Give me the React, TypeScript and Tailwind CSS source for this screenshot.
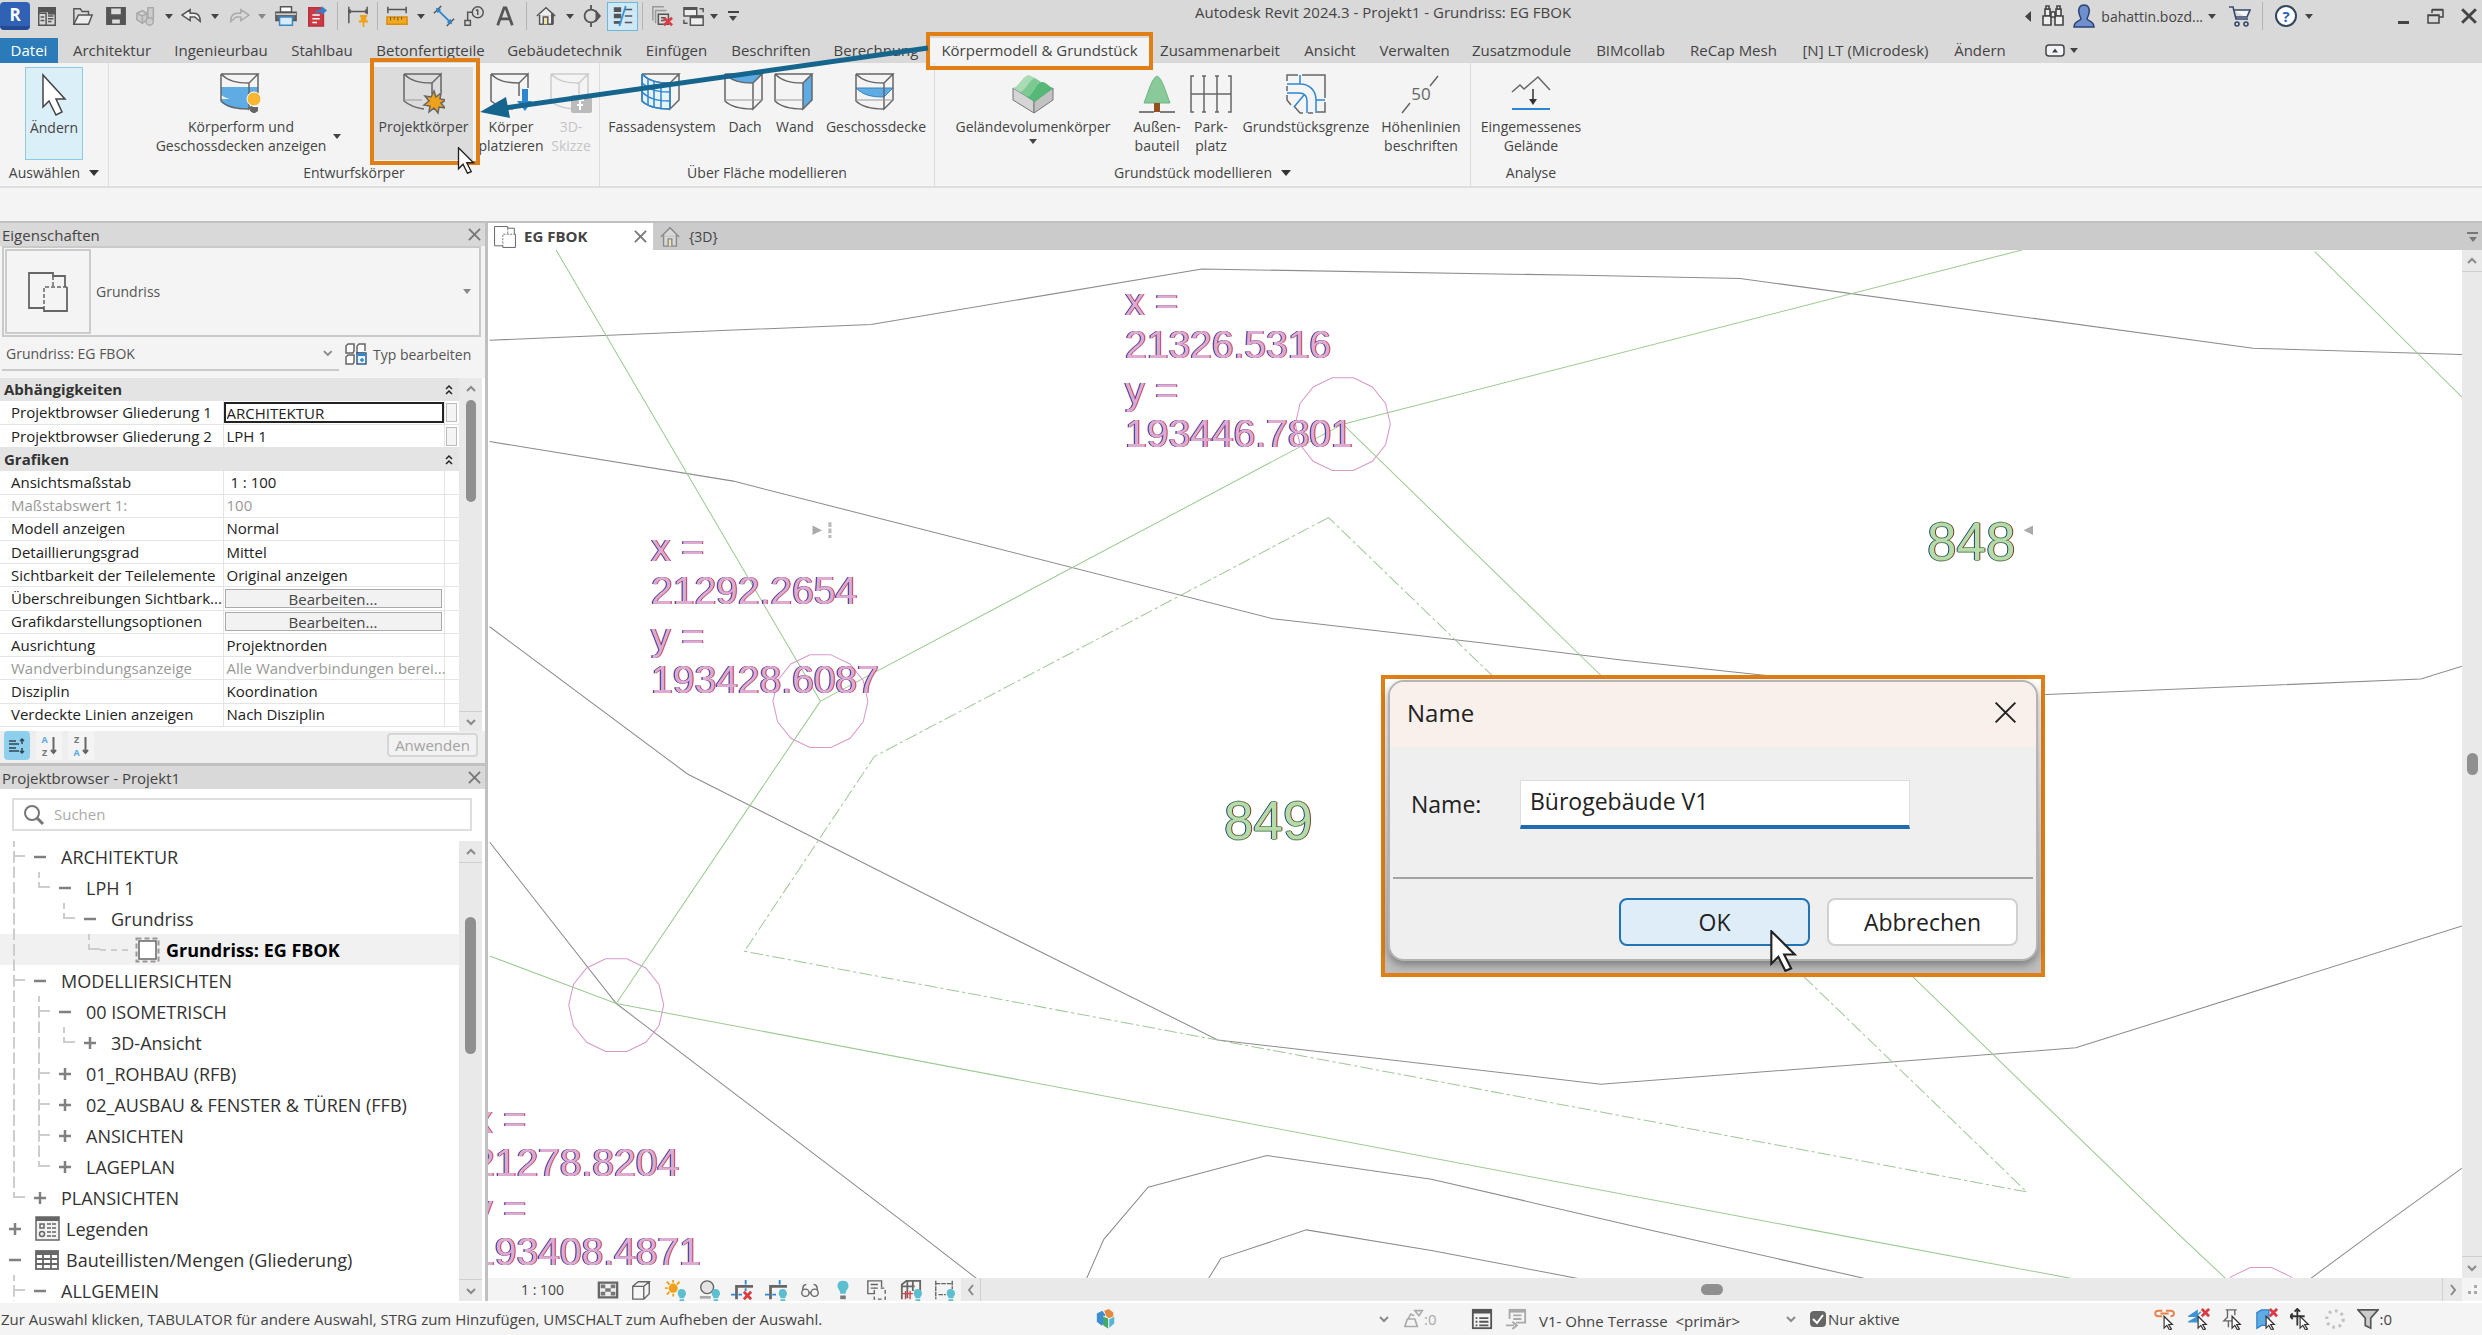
import React from 'react';

type IconProps = { className?: string };

const Caret: React.FC<IconProps> = ({ className = 'text-[#444]' }) => (
  <svg width="8" height="5" viewBox="0 0 8 5" className={`shrink-0 ${className}`}>
    <path d="M0 0h8L4 5z" fill="currentColor" />
  </svg>
);

const Chevron: React.FC<{ dir: 'up' | 'down' | 'left' | 'right' }> = ({ dir }) => {
  const d = {
    up: 'M2 8l4-4 4 4',
    down: 'M2 4l4 4 4-4',
    left: 'M8 1L4 6l4 5',
    right: 'M4 1l4 5-4 5',
  }[dir];
  return (
    <svg width="12" height="12" viewBox="0 0 12 12" fill="none" stroke="#8a8a8a" strokeWidth="2">
      <path d={d} />
    </svg>
  );
};

const Cross: React.FC<{ size: number; color?: string; weight?: number }> = ({ size, color = '#777', weight = 2 }) => (
  <svg width={size} height={size} viewBox="0 0 14 14" fill="none" stroke={color} strokeWidth={weight}>
    <path d="M1 1l12 12M13 1L1 13" />
  </svg>
);

const Pointer: React.FC<IconProps> = ({ className }) => (
  <svg viewBox="0 0 24 36" className={className}>
    <path d="M2 1v28l6-6 6 12 5-2-6-12h9z" fill="#fff" stroke="#222" strokeWidth="1.8" />
  </svg>
);

/* ---------- Quick access icons ---------- */

const Qa: React.FC<{ children: React.ReactNode; size?: number }> = ({ children, size = 22 }) => (
  <svg width={size} height={size} viewBox="0 0 24 24" fill="none" stroke="#555" strokeWidth="1.6">
    {children}
  </svg>
);

const quickItems: { id: string; w: string; label: string; icon: React.ReactNode }[] = [
  {
    id: 'panel', w: 'w-[34px]', label: 'Startseite',
    icon: <Qa><path d="M3 3h18v19H3z" /><path d="M3 3h18v4H3z" fill="#555" /><path d="M3 9h8v13M13 12h6M13 15h6M13 18h4M5 13h4M5 17h4" /><path d="M13 9h8" strokeWidth="3" /></Qa>,
  },
  {
    id: 'open', w: 'w-[38px]', label: 'Öffnen',
    icon: <Qa><path d="M2 21V4h7l2 3h7v4" /><path d="M2 21l5-10h15l-4 10z" fill="#eee" /></Qa>,
  },
  {
    id: 'save', w: 'w-[28px]', label: 'Speichern',
    icon: <Qa><path d="M2 3h20v18H2z" fill="#555" /><path d="M6 3h12v8H6z" fill="#ddd" /><path d="M7 15h10v6H7z" fill="#ddd" /></Qa>,
  },
  {
    id: 'sync', w: 'w-[32px]', label: 'Synchronisieren',
    icon: <Qa><g stroke="#a9a9a9" fill="#ccc"><path d="M2 9l6-3 5 3v7l-5 4-6-4zM2 9l6 3 5-3M8 12v8" /><path d="M14 3h6v12h-6z" /><circle cx="16" cy="18" r="4" /></g></Qa>,
  },
  { id: 'c1', w: 'w-[14px]', label: 'Synchronisieren Optionen', icon: <Caret /> },
  {
    id: 'undo', w: 'w-[32px]', label: 'Rückgängig',
    icon: <Qa><path d="M10 5l-9 6 9 6v-4h5l6 5c0-6-3-9-7-9h-4z" fill="#eee" /></Qa>,
  },
  { id: 'c2', w: 'w-[14px]', label: 'Rückgängig Optionen', icon: <Caret /> },
  {
    id: 'redo', w: 'w-[34px]', label: 'Wiederherstellen',
    icon: <Qa><path d="M14 5l9 6-9 6v-4H9l-6 5c0-6 3-9 7-9h4z" stroke="#aaa" /></Qa>,
  },
  { id: 'c3', w: 'w-[12px]', label: 'Wiederherstellen Optionen', icon: <Caret className="text-[#888]" /> },
  {
    id: 'print', w: 'w-[36px]', label: 'Drucken',
    icon: <Qa><path d="M6 2h12v6H6z" fill="#fff" /><path d="M1 8h22v9H1z" fill="#666" /><path d="M5 13h14v9H5z" fill="#d7ecfa" stroke="#3b87c4" /><path d="M1 10h22" stroke="#ddd" /></Qa>,
  },
  {
    id: 'pdf', w: 'w-[26px]', label: 'Als PDF exportieren',
    icon: <Qa><path d="M3 3h13l3 4v16H3z" fill="#cc3b45" stroke="#b92f3a" /><path d="M7 11h8M7 15h8M7 19h5" stroke="#fff" /><path d="M10 10c0-4 3-5 7-5V1l6 5-6 5V8c-3 0-5 0-7 2z" fill="#2f83cc" stroke="none" /></Qa>,
  },
];

const quickItemsTwo: typeof quickItems = [
  {
    id: 'ruler', w: 'w-[38px]', label: 'Messen',
    icon: <Qa><path d="M2 5h20M2 2v7M22 2v7" /><path d="M1 13h22v8H1z" fill="#f5a81c" stroke="#d98d0a" /><path d="M5 13v4M9 13v3M13 13v4M17 13v3" strokeWidth="1" /></Qa>,
  },
  { id: 'c4', w: 'w-[10px]', label: 'Messen Optionen', icon: <Caret /> },
  {
    id: 'align', w: 'w-[36px]', label: 'Ausgerichtete Bemaßung',
    icon: <Qa><path d="M5 5l14 14" stroke="#2d86d0" strokeWidth="2" /><path d="M1 9l8-8M15 23l8-8" /><path d="M3 3l6 2-4 4zM21 21l-6-2 4-4z" fill="#2d86d0" stroke="none" /></Qa>,
  },
  {
    id: 'tag', w: 'w-[26px]', label: 'Beschriftung nach Kategorie',
    icon: <Qa><circle cx="15" cy="8" r="6" /><path d="M15 5v6M13 6l2-1M9 8H4v9M1 17h6v5H1z" /></Qa>,
  },
  {
    id: 'text', w: 'w-[34px]', label: 'Text',
    icon: <Qa><path d="M4 22L11 3h2l7 19M7 15h10" strokeWidth="3" /></Qa>,
  },
];

const quickItemsThree: typeof quickItems = [
  {
    id: 'home', w: 'w-[38px]', label: '3D-Ansicht',
    icon: <Qa><path d="M2 12L12 3l10 9M5 11v10h14V11" fill="#eee" /><path d="M9 21v-8h5v8" fill="#f1e2a5" /><path d="M19 9v12" strokeWidth="3" /></Qa>,
  },
  { id: 'c5', w: 'w-[10px]', label: '3D-Ansicht Optionen', icon: <Caret /> },
  {
    id: 'section', w: 'w-[32px]', label: 'Schnitt',
    icon: <Qa><circle cx="12" cy="12" r="7" strokeWidth="2" /><path d="M12 0v5M12 19v5" strokeWidth="2" /><path d="M17 5l6 7-6 7z" fill="#555" stroke="none" /></Qa>,
  },
];

const QuickGroup: React.FC<{ items: typeof quickItems }> = ({ items }) => (
  <>
    {items.map((item) => (
      <button key={item.id} aria-label={item.label} className={`${item.w} h-8 shrink-0 flex items-center justify-center`}>
        {item.icon}
      </button>
    ))}
  </>
);

const Separator = () => <div className="w-px h-7 shrink-0 bg-[#b4b4b4]" />;

const TitleBar = () => (
  <div className="h-[38px] flex items-start bg-[#d9d9d9]">
    <div className="flex items-center h-8">
      <button aria-label="Revit" className="w-[30px] h-[28px] rounded-sm bg-[#2f62b4] border-b-4 border-[#234a92] text-white font-bold text-[17px] leading-none">R</button>
      <QuickGroup items={quickItems} />
      <div className="w-[7px] shrink-0" />
      <Separator />
      <button aria-label="Bemaßung fixieren" className="w-[39px] h-8 flex items-center justify-center">
        <Qa><path d="M2 2v18M22 2v8M2 7h20" /><path d="M4 5l-2 2 2 2M20 5l2 2-2 2" /><path d="M14 11h8v2h-1v4h2v2h-4v5h-2v-5h-4v-2h2v-4h-1z" fill="#f0a11a" stroke="none" /></Qa>
      </button>
      <Separator />
      <QuickGroup items={quickItemsTwo} />
      <div className="w-1 shrink-0" />
      <Separator />
      <QuickGroup items={quickItemsThree} />
      <button aria-label="Dünne Linien" className="w-[31px] h-[29px] bg-[#cfe8f5] border border-[#6cb9de] flex items-center justify-center">
        <Qa><path d="M2 5h8M2 12h8" strokeWidth="5" /><path d="M2 19h8" strokeWidth="3" /><path d="M14 5h8M14 12h8M14 19h8" /><path d="M15 1L8 23" stroke="#3493d6" strokeWidth="2" /></Qa>
      </button>
      <div className="w-1" />
      <Separator />
      <button aria-label="Inaktive Ansichten schließen" className="w-[38px] h-8 flex items-center justify-center">
        <Qa><path d="M2 17V2h12M5 20V6h12" stroke="#999" /><path d="M8 10h11v11H8zM11 14h5M11 17h4" /><path d="M14 14l9 8M23 14l-9 8" stroke="#dc3b45" strokeWidth="3" /></Qa>
      </button>
      <button aria-label="Fenster wechseln" className="w-[26px] h-8 flex items-center justify-center">
        <Qa><path d="M1 3h14v9H1zM8 12h14v10H8z" fill="#eee" /><path d="M8 13h14M1 4h14" strokeWidth="3" /><path d="M18 4h4v4M5 20H1v-4" /></Qa>
      </button>
      <button aria-label="Fenster Optionen" className="w-[14px] h-8 flex items-center justify-center"><Caret /></button>
      <button aria-label="Schnellzugriff anpassen" className="w-[24px] h-8 flex flex-col items-center justify-center gap-[3px]">
        <span className="w-[11px] h-[2px] bg-[#444]" />
        <Caret />
      </button>
    </div>
    <div className="ml-[450px] leading-6 text-[15px] text-[#444] whitespace-nowrap">Autodesk Revit 2024.3 - Projekt1 - Grundriss: EG FBOK</div>
    <div className="ml-auto flex items-center h-8 text-[#444]">
      <button aria-label="Infocenter ausblenden" className="w-[8px]">
        <svg width="6" height="11" viewBox="0 0 6 11"><path d="M6 0v11L0 5.5z" fill="#444" /></svg>
      </button>
      <button aria-label="Suchen" className="ml-2">
        <Qa size={24}><g stroke="#444" fill="#eee"><path d="M4 5h5v7H4zM15 5h5v7h-5z" /><path d="M2 12h8v9H2zM14 12h8v9h-8z" /><path d="M5 2h3v3H5zM16 2h3v3h-3zM10 8h4v5h-4z" /></g></Qa>
      </button>
      <button className="flex items-center ml-[7px] text-[14px] whitespace-nowrap">
        <svg width="24" height="26" viewBox="0 0 24 26" className="mr-[5px]">
          <path d="M12 2c4 0 6 3 5 8-.5 3-2 5-2 6 1 2 7 2 7 8H2c0-6 6-6 7-8 0-1-1.5-3-2-6C6 5 8 2 12 2z" fill="#6f8fcf" stroke="#2b4372" strokeWidth="1.5" />
        </svg>
        bahattin.bozd...
        <Caret className="ml-[5px] text-[#444]" />
      </button>
      <button aria-label="App Store" className="ml-3">
        <Qa size={24}><path d="M1 3h4l3 12h12M5 6h17l-3 7H8" stroke="#37466b" fill="#f4f6fb" /><circle cx="9" cy="20" r="2" stroke="#37466b" /><circle cx="18" cy="20" r="2" stroke="#37466b" /></Qa>
      </button>
      <div className="w-[10px]" />
      <Separator />
      <button aria-label="Hilfe" className="ml-3 w-[22px] h-[22px] rounded-full border-2 border-[#34465f] bg-white text-[#2d63b8] text-[15px] font-bold leading-none">?</button>
      <button aria-label="Hilfe Optionen" className="w-[24px] flex justify-center"><Caret /></button>
      <button aria-label="Minimieren" className="ml-[77px] w-[11px] h-[3px] bg-[#444] mt-3" />
      <button aria-label="Wiederherstellen" className="ml-[18px]">
        <svg width="17" height="16" viewBox="0 0 17 16" fill="none" stroke="#444" strokeWidth="1.5"><path d="M5 5V2h11v7h-4M5 1.500h11" /><path d="M1 7h11v8H1zM1 7.500h11" /></svg>
      </button>
      <button aria-label="Schließen" className="ml-[17px] mr-[5px]"><Cross size={16} color="#444" weight={2.5} /></button>
    </div>
  </div>
);

/* ---------- Ribbon ---------- */

const tabs = [
  { name: 'Architektur', w: 'w-[102px]' },
  { name: 'Ingenieurbau', w: 'w-[116px]' },
  { name: 'Stahlbau', w: 'w-[86px]' },
  { name: 'Betonfertigteile', w: 'w-[131px]' },
  { name: 'Gebäudetechnik', w: 'w-[137px]' },
  { name: 'Einfügen', w: 'w-[87px]' },
  { name: 'Beschriften', w: 'w-[102px]' },
  { name: 'Berechnung', w: 'w-[108px]' },
  { name: 'Körpermodell & Grundstück', w: 'w-[219px]' },
  { name: 'Zusammenarbeit', w: 'w-[142px]' },
  { name: 'Ansicht', w: 'w-[78px]' },
  { name: 'Verwalten', w: 'w-[91px]' },
  { name: 'Zusatzmodule', w: 'w-[123px]' },
  { name: 'BIMcollab', w: 'w-[95px]' },
  { name: 'ReCap Mesh', w: 'w-[111px]' },
  { name: '[N] LT (Microdesk)', w: 'w-[153px]' },
  { name: 'Ändern', w: 'w-[76px]' },
];

const RibbonTabs = () => (
  <div className="h-[25px] flex items-stretch bg-[#d9d9d9] text-[15px] leading-5 text-[#444] whitespace-nowrap">
    <button className="w-[58px] mr-[3px] pb-[2px] bg-[#2b7bb9] text-white">Datei</button>
    {tabs.map((tab) => (
      <button key={tab.name} className={`${tab.w} shrink-0 pb-[2px] ${tab.name.startsWith('Körper') ? 'bg-[#f4f4f4]' : ''}`}>
        {tab.name}
      </button>
    ))}
    <button aria-label="Multifunktionsleiste minimieren" className="ml-[27px] flex items-center gap-[5px]">
      <svg width="20" height="13" viewBox="0 0 20 13"><rect x="1" y="1" width="18" height="11" rx="3" fill="#f2f4f8" stroke="#444" strokeWidth="1.5" /><path d="M7 8.500h6L10 4.500z" fill="#444" /></svg>
      <Caret />
    </button>
  </div>
);

// Base volume shared by all mass tools; extras are layered on top
const Mass: React.FC<{ under?: React.ReactNode; children?: React.ReactNode; stroke?: string }> = ({ under, children, stroke = '#666' }) => (
  <svg width="42" height="44" viewBox="-1 -2 42 44" fill="none" stroke={stroke} strokeWidth="1.5">
    {under}
    <path d="M0 0h37l-9 9v26l9-9V0M0 0v27c6 6 14 8 28 8M0 0c7 7 15 9 28 9" />
    {children}
  </svg>
);

const massBulb = (
  <Mass under={<path d="M0 13h37v8l-9 6C14 27 6 25 0 21zM0 25h28v10C14 36 6 34 0 28z" fill="#5fabe4" stroke="none" />}>
    <circle cx="33" cy="25" r="7" fill="#f8b632" stroke="#fff" strokeWidth="1" />
    <path d="M29 33h8v4l-3 2h-2l-3-2z" fill="#666" stroke="none" />
  </Mass>
);

// The star and the down arrow sit where the lower right edges are cut away
const massStar = (
  <svg width="42" height="44" viewBox="-1 -2 42 44" fill="none" stroke="#666" strokeWidth="1.5">
    <path d="M28 20V9l9-9v18M0 0h37M0 0v27c6 5 12 7 20 8M0 0c7 7 15 9 28 9" />
    <path d="M0 26h18" stroke="#999" strokeWidth="1" />
    <path d="M30 17l2 6 5-4-1 6 6 1-5 3 4 5-6-1-1 6-4-5-5 4 1-6-6-1 5-4-4-5 6 1z" fill="#f0a11a" />
  </svg>
);

const massPlace = (
  <svg width="42" height="44" viewBox="-1 -2 42 44" fill="none" stroke="#666" strokeWidth="1.5">
    <path d="M28 22V9l9-9v14M0 0h37M0 0v27c6 5 12 7 22 8M0 0c7 7 15 9 28 9" />
    <path d="M31 15h6v12h4l-7 10-8-10h5z" fill="#2d86d0" stroke="none" />
  </svg>
);

const massFamily = (
  <Mass stroke="#ccc">
    <rect x="20" y="21" width="21" height="18" rx="2" fill="#bbb" stroke="none" />
    <path d="M33 26h-4v10M26 31h6" stroke="#fff" strokeWidth="2" />
  </Mass>
);

const massCurtain = (
  <Mass under={<path d="M0 0c7 7 15 9 28 9v26C14 35 6 33 0 27z" fill="#e6f3fc" stroke="none" />}>
    <path d="M0 9c7 7 15 9 28 9M0 18c7 7 15 9 28 9M6 5v26M12 7v27M19 9v26M28 9v26M0 0v27c6 6 14 8 28 8M0 0c7 7 15 9 28 9" stroke="#2d86d0" />
  </Mass>
);

const massRoof = (
  <Mass under={<path d="M0 0h37l-9 9C15 9 7 7 0 0z" fill="#5fabe4" stroke="none" />}>
    <path d="M0 26h37" stroke="#999" strokeWidth="1" />
  </Mass>
);

const massWall = (
  <Mass under={<path d="M37 0l-9 9v26l9-9z" fill="#5fabe4" stroke="none" />}>
    <path d="M0 26h28" stroke="#999" strokeWidth="1" />
  </Mass>
);

const massFloor = (
  <Mass under={<path d="M0 14h37l-9 9C15 23 7 21 0 14z" fill="#5fabe4" stroke="#3b83bd" strokeWidth="1" />}>
    <path d="M0 26h37" stroke="#999" strokeWidth="1" />
  </Mass>
);

const terrain = (
  <svg width="42" height="40" viewBox="0 0 42 40">
    <path d="M1 14v12l21 13V27z" fill="#d5d5d5" stroke="#777" />
    <path d="M22 27v12l19-13V14z" fill="#c2c2c2" stroke="#777" />
    <path d="M1 14c7-2 9-12 16-13l6 3c-6 3-9 12-15 14z" fill="#a9dcb5" />
    <path d="M8 18c6-2 9-12 15-14l6 4c-6 2-8 13-14 15z" fill="#7cc994" />
    <path d="M15 23c6-2 8-13 14-15 5-1 8 5 12 6L23 28z" fill="#55b877" />
  </svg>
);

const tree = (
  <svg width="38" height="40" viewBox="0 0 38 40">
    <path d="M19 2c5 2 8 14 13 27H6C11 16 14 4 19 2z" fill="#8ac99a" stroke="#6db582" />
    <path d="M16 29h6v9h-6z" fill="#96501f" />
    <path d="M1 38h15M22 38h15" stroke="#555" strokeWidth="1.5" />
  </svg>
);

const parking = (
  <svg width="42" height="40" viewBox="0 0 42 40" fill="none" stroke="#666" strokeWidth="1.5">
    <path d="M4 2H1v36h3M12 2h4M14 2v36M12 38h4M25 2h4M27 2v36M25 38h4M38 2h3v36h-3M1 20h40" />
  </svg>
);

const boundary = (
  <svg width="40" height="42" viewBox="0 0 40 42" fill="none" strokeWidth="1.5">
    <path d="M1 8V2h11M16 2h23v23M39 29v10h-8M27 40h-5M17 40h-3L8 33M1 13v5M1 22v5l4 5" stroke="#666" />
    <path d="M1 11h13c10 0 16 7 16 16v13M1 20h12c5 0 8 3 8 8v12M14 2v9M30 27h9M18 22L8 34" stroke="#2d86d0" />
  </svg>
);

const contourLabel = (
  <svg width="40" height="42" viewBox="0 0 40 42" fill="none" stroke="#666" strokeWidth="1.5">
    <path d="M29 13l8-10M1 40l8-10" />
    <text x="20" y="27" textAnchor="middle" fontSize="17" fill="#666" stroke="none">50</text>
  </svg>
);

const graded = (
  <svg width="42" height="40" viewBox="0 0 42 40" fill="none" stroke="#666" strokeWidth="1.5">
    <path d="M2 18l8-7 4 4L28 3l12 13" />
    <path d="M23 15v13" stroke="#333" />
    <path d="M19 25h8l-4 6z" fill="#333" stroke="none" />
    <path d="M2 35h38" stroke="#2d86d0" strokeWidth="2" />
  </svg>
);

const Tool: React.FC<{ w: string; icon: React.ReactNode; lines: string[]; look?: string; caret?: boolean }> = ({ w, icon, lines, look = '', caret }) => (
  <button className={`${w} ${look} h-[93px] shrink-0 flex flex-col items-center pt-1 text-[14px] leading-[19px] whitespace-nowrap`}>
    <span className="h-[46px] flex items-center">{icon}</span>
    {lines.map((line) => (
      <span key={line}>{line}</span>
    ))}
    {caret && <Caret className="mt-[3px] text-[#444]" />}
  </button>
);

const RibbonPanel: React.FC<{ w: string; title: string; caret?: boolean; last?: boolean; children: React.ReactNode }> = ({ w, title, caret, last, children }) => (
  <section className={`${w} shrink-0 flex flex-col pt-1 ${last ? '' : 'border-r border-[#dcdcdc]'}`}>
    <div className="flex flex-1 items-start">{children}</div>
    <div className="h-[26px] flex items-center justify-center gap-[9px] text-[14px] leading-none">
      {title}
      {caret && <svg width="10" height="6" viewBox="0 0 10 6"><path d="M0 0h10L5 6z" fill="#333" /></svg>}
    </div>
  </section>
);

const Ribbon = () => (
  <div className="h-[125px] flex bg-[#f4f4f4] border-b-2 border-[#dedede] text-[#444]">
    <RibbonPanel w="w-[109px]" title="Auswählen" caret>
      <Tool
        w="w-[58px]" look="ml-[25px] bg-[#dbeff8] border border-[#8ccbe6]" lines={['Ändern']}
        icon={<svg width="28" height="44" viewBox="0 0 28 44"><path d="M3 2v32l6-6 7 14 6-3-6-13h9z" fill="#fff" stroke="#444" strokeWidth="1.5" /></svg>}
      />
    </RibbonPanel>
    <RibbonPanel w="w-[491px]" title="Entwurfskörper">
      <Tool w="w-[200px]" look="ml-[32px]" lines={['Körperform und', 'Geschossdecken anzeigen']} icon={massBulb} />
      <span className="w-[33px] h-[93px] flex items-center pt-[46px]"><span className="-ml-2"><Caret className="text-[#444]" /></span></span>
      <Tool w="w-[99px]" look="bg-[#dcdcdc]" lines={['Projektkörper']} icon={massStar} />
      <Tool w="w-[76px]" lines={['Körper', 'platzieren']} icon={massPlace} />
      <Tool w="w-[44px]" look="text-[#c4c4c4]" lines={['3D-', 'Skizze']} icon={massFamily} />
    </RibbonPanel>
    <RibbonPanel w="w-[335px]" title="Über Fläche modellieren">
      <Tool w="w-[124px]" lines={['Fassadensystem']} icon={massCurtain} />
      <Tool w="w-[42px]" lines={['Dach']} icon={massRoof} />
      <Tool w="w-[58px]" lines={['Wand']} icon={massWall} />
      <Tool w="w-[104px]" lines={['Geschossdecke']} icon={massFloor} />
    </RibbonPanel>
    <RibbonPanel w="w-[536px]" title="Grundstück modellieren" caret>
      <Tool w="w-[182px]" look="ml-[7px]" lines={['Geländevolumenkörper']} icon={terrain} caret />
      <Tool w="w-[66px]" lines={['Außen-', 'bauteil']} icon={tree} />
      <Tool w="w-[42px]" lines={['Park-', 'platz']} icon={parking} />
      <Tool w="w-[148px]" lines={['Grundstücksgrenze']} icon={boundary} />
      <Tool w="w-[82px]" lines={['Höhenlinien', 'beschriften']} icon={contourLabel} />
    </RibbonPanel>
    <RibbonPanel w="w-[120px]" title="Analyse" last>
      <Tool w="w-[120px]" lines={['Eingemessenes', 'Gelände']} icon={graded} />
    </RibbonPanel>
  </div>
);

/* ---------- Properties palette ---------- */

const PaletteHeader: React.FC<{ title: string }> = ({ title }) => (
  <div className="h-[23px] shrink-0 flex items-center justify-between bg-[#d9d9d9] pl-[2px] pr-[4px] text-[15px] leading-5 text-[#444]">
    <h2>{title}</h2>
    <button aria-label={`${title} schließen`}><Cross size={13} /></button>
  </div>
);

type Row = { head?: string; name?: string; value?: string; kind?: 'input' | 'button' | 'muted'; extra?: boolean };

const rows: Row[] = [
  { head: 'Abhängigkeiten' },
  { name: 'Projektbrowser Gliederung 1', value: 'ARCHITEKTUR', kind: 'input', extra: true },
  { name: 'Projektbrowser Gliederung 2', value: 'LPH 1', extra: true },
  { head: 'Grafiken' },
  { name: 'Ansichtsmaßstab', value: ' 1 : 100' },
  { name: 'Maßstabswert 1:', value: '100', kind: 'muted' },
  { name: 'Modell anzeigen', value: 'Normal' },
  { name: 'Detaillierungsgrad', value: 'Mittel' },
  { name: 'Sichtbarkeit der Teilelemente', value: 'Original anzeigen' },
  { name: 'Überschreibungen Sichtbark...', value: 'Bearbeiten...', kind: 'button' },
  { name: 'Grafikdarstellungsoptionen', value: 'Bearbeiten...', kind: 'button' },
  { name: 'Ausrichtung', value: 'Projektnorden' },
  { name: 'Wandverbindungsanzeige', value: 'Alle Wandverbindungen berei...', kind: 'muted' },
  { name: 'Disziplin', value: 'Koordination' },
  { name: 'Verdeckte Linien anzeigen', value: 'Nach Disziplin' },
];

const PropertyRow: React.FC<{ row: Row }> = ({ row }) => {
  if (row.head) {
    return (
      <tr className="h-[23px] bg-[#e4e4e4]">
        <th colSpan={3} className="text-left font-bold text-[#333] pl-1 pr-[6px]">
          <span className="flex items-center justify-between">
            {row.head}
            <svg width="8" height="11" viewBox="0 0 8 11" fill="none" stroke="#222" strokeWidth="1.5"><path d="M1 5l3-3 3 3M1 10l3-3 3 3" /></svg>
          </span>
        </th>
      </tr>
    );
  }
  const id = row.name?.replace(/\W/g, '');
  return (
    <tr className={`h-[23px] border-b border-[#e4e4e4] ${row.kind === 'muted' ? 'text-[#999]' : 'text-[#222]'}`}>
      <td className="pl-[11px] border-r border-[#e4e4e4] whitespace-nowrap"><label htmlFor={id}>{row.name}</label></td>
      <td className={`border-r border-[#e4e4e4] whitespace-pre ${row.kind === 'button' || row.kind === 'input' ? '' : 'pl-[3px]'}`}>
        {row.kind === 'input' && (
          <input id={id} defaultValue={row.value} className="block w-full h-[21px] bg-white border-2 border-[#222] pl-px" />
        )}
        {row.kind === 'button' && (
          <button id={id} className="block w-[217px] h-[19px] leading-[16px] ml-px bg-[#f2f2f2] border border-[#aaa] text-[#444]">{row.value}</button>
        )}
        {row.kind !== 'input' && row.kind !== 'button' && row.value}
      </td>
      <td>{row.extra && <button aria-label={`${row.name} Optionen`} className="block ml-px w-[11px] h-[19px] bg-[#f4f4f4] border border-[#bbb]" />}</td>
    </tr>
  );
};

const PlanIcon: React.FC<IconProps> = ({ className }) => (
  <svg viewBox="0 0 40 40" className={className} fill="none" stroke="#666" strokeWidth="1.8">
    <path d="M16 36H1V1h24v3h12v11" />
    <path d="M16 36v3h23V15" />
    <path d="M39 15H16v21M25 4v11" strokeDasharray="4 2" strokeWidth="1.5" />
  </svg>
);

const Properties = () => (
  <section className="shrink-0 bg-[#f4f4f4] border-b-[3px] border-[#c0c0c0]">
    <PaletteHeader title="Eigenschaften" />
    <button className="ml-[2px] w-[479px] h-[91px] border-2 border-[#cacaca] flex items-center text-[14px] text-[#555]">
      <span className="w-[86px] h-[85px] ml-px border-2 border-[#ccc] flex items-center justify-center">
        <PlanIcon className="w-10 h-10" />
      </span>
      <span className="ml-[5px] mr-auto">Grundriss</span>
      <Caret className="mr-[8px] text-[#888]" />
    </button>
    <div className="h-[41px] flex items-start text-[14px] text-[#555]">
      <div className="ml-[2px] w-[337px] h-[34px] border-b-2 border-[#cacaca] flex items-center pr-[5px]">
        <select aria-label="Ansicht" className="appearance-none w-full pl-1 outline-none">
          <option>Grundriss: EG FBOK</option>
        </select>
        <Chevron dir="down" />
      </div>
      <button className="ml-[6px] h-[34px] flex items-center gap-[6px] whitespace-nowrap">
        <svg width="22" height="22" viewBox="0 0 22 22" fill="#fff" stroke="#666" strokeWidth="1.5">
          <path d="M1 3l2-2h6v7l-1 2H1zM12 3l2-2h6v7M1 14l2-2h6v7l-1 2H1zM12 3v7h7" />
          <rect x="12" y="10" width="9" height="11" fill="#eaf4fc" stroke="#335c8c" /><path d="M13 12h7" stroke="#2d86d0" strokeWidth="2" /><path d="M15 17h4M17 15v4" stroke="#2d86d0" />
        </svg>
        Typ bearbeiten
      </button>
    </div>
    <div className="h-[353px] flex bg-white">
      <div className="w-[459px] overflow-hidden">
        <table className="w-full h-[349px] table-fixed border-collapse text-[15px] leading-[19px]">
          <colgroup><col className="w-[223px]" /><col className="w-[221px]" /><col className="w-[15px]" /></colgroup>
          <tbody>
            {rows.map((row) => <PropertyRow key={row.head ?? row.name} row={row} />)}
          </tbody>
        </table>
      </div>
      <div className="w-[23px] bg-[#e9e9e9] flex flex-col items-center">
        <span className="h-[22px] flex items-center"><Chevron dir="up" /></span>
        <span className="w-[10px] h-[102px] rounded-full bg-[#8f8f8f]" />
        <span className="mt-auto h-[20px] w-full border-t border-[#d0d0d0] flex items-center justify-center"><Chevron dir="down" /></span>
      </div>
    </div>
    <div className="h-[32px] flex items-start bg-[#eee] pl-[4px] pr-[7px] gap-[6px]">
      <button aria-label="Nach Gruppen sortieren" className="w-[26px] h-[29px] rounded bg-[#8fcfee] flex items-center justify-center">
        <svg width="18" height="18" viewBox="0 0 18 18" fill="none" stroke="#345" strokeWidth="1.5"><path d="M1 4h7M1 7h10M1 11h7M1 14h10M14 2v5M14 11v5M12 4l2-2 2 2M12 14l2 2 2-2" /></svg>
      </button>
      <button aria-label="Aufsteigend sortieren" className="w-[26px] h-[29px] bg-[#f4f4f4] flex items-center justify-center gap-[2px] text-[9px] leading-[13px] font-bold">
        <span className="flex flex-col"><span className="text-[#5aa9e0]">A</span><span className="text-[#777]">Z</span></span>
        <svg width="7" height="18" viewBox="0 0 7 18" fill="none" stroke="#666" strokeWidth="2"><path d="M3.500 0v16M1 13l2.500 3L6 13" /></svg>
      </button>
      <button aria-label="Absteigend sortieren" className="w-[26px] h-[29px] bg-[#f4f4f4] flex items-center justify-center gap-[2px] text-[9px] leading-[13px] font-bold">
        <span className="flex flex-col"><span className="text-[#777]">Z</span><span className="text-[#5aa9e0]">A</span></span>
        <svg width="7" height="18" viewBox="0 0 7 18" fill="none" stroke="#666" strokeWidth="2"><path d="M3.500 0v16M1 13l2.500 3L6 13" /></svg>
      </button>
      <button disabled className="ml-auto mt-[2px] w-[91px] h-[24px] rounded border-2 border-[#d6d6d6] bg-[#f2f2f2] text-[#a3a3a3] text-[15px] leading-5">Anwenden</button>
    </div>
  </section>
);

/* ---------- Project browser ---------- */

// guides: one letter per indent level (v = pass-through, t = tee, l = last, _ = empty)
type Node = { label: string; guides: string; toggle?: 'plus' | 'minus'; icon?: 'view' | 'legend' | 'schedule'; active?: boolean };

const nodes: Node[] = [
  { label: 'ARCHITEKTUR', guides: 't', toggle: 'minus' },
  { label: 'LPH 1', guides: 'vl', toggle: 'minus' },
  { label: 'Grundriss', guides: 'v_l', toggle: 'minus' },
  { label: 'Grundriss: EG FBOK', guides: 'v__l', icon: 'view', active: true },
  { label: 'MODELLIERSICHTEN', guides: 't', toggle: 'minus' },
  { label: '00 ISOMETRISCH', guides: 'vt', toggle: 'minus' },
  { label: '3D-Ansicht', guides: 'vvl', toggle: 'plus' },
  { label: '01_ROHBAU (RFB)', guides: 'vt', toggle: 'plus' },
  { label: '02_AUSBAU & FENSTER & TÜREN (FFB)', guides: 'vt', toggle: 'plus' },
  { label: 'ANSICHTEN', guides: 'vt', toggle: 'plus' },
  { label: 'LAGEPLAN', guides: 'vl', toggle: 'plus' },
  { label: 'PLANSICHTEN', guides: 'l', toggle: 'plus' },
  { label: 'Legenden', guides: '', toggle: 'plus', icon: 'legend' },
  { label: 'Bauteillisten/Mengen (Gliederung)', guides: '', toggle: 'minus', icon: 'schedule' },
  { label: 'ALLGEMEIN', guides: 't', toggle: 'minus' },
];

const Guide: React.FC<{ kind: string }> = ({ kind }) => (
  <span className="w-[25px] h-full shrink-0 flex flex-col pl-[13px]">
    {kind !== '_' && (
      <>
        <span className={`h-1/2 border-l-2 border-dashed border-[#cdcdcd] ${kind === 'v' ? '' : 'border-b-2'}`} />
        <span className={`h-1/2 border-dashed border-[#cdcdcd] ${kind === 'l' ? '' : 'border-l-2'}`} />
      </>
    )}
  </span>
);

const nodeIcons = {
  view: (
    <svg width="25" height="26" viewBox="0 0 25 26" fill="none" stroke="#666" strokeWidth="1.5"><rect x="4" y="4" width="17" height="18" fill="#fff" /><rect x="1.5" y="1.5" width="22" height="23" stroke="#999" strokeDasharray="5 3" strokeWidth="2" /></svg>
  ),
  legend: (
    <svg width="25" height="25" viewBox="0 0 25 25" fill="none" stroke="#666" strokeWidth="1.5"><rect x="1" y="1" width="23" height="23" fill="#f2f2f2" /><path d="M1 3h23" strokeWidth="4" /><rect x="5" y="8" width="4" height="4" /><circle cx="7" cy="18" r="2.5" /><path d="M12 8h9M12 12h9M12 16h9M12 20h9" strokeDasharray="4 1" /></svg>
  ),
  schedule: (
    <svg width="25" height="20" viewBox="0 0 25 20" fill="none" stroke="#666" strokeWidth="1.8"><rect x="1" y="1" width="22" height="18" fill="#fff" /><path d="M1 3h22" strokeWidth="4" /><path d="M8 1v18M16 5v14M1 9h22M1 14h22" /></svg>
  ),
};

const TreeRow: React.FC<{ node: Node }> = ({ node }) => (
  <li className={`h-[31px] flex items-center whitespace-nowrap ${node.active ? 'bg-[#f1f1f1] font-bold text-black' : 'text-[#333]'}`}>
    {node.guides.split('').map((kind, i) => <Guide key={i} kind={kind} />)}
    {node.toggle && (
      <button aria-label={`${node.label} ein- oder ausklappen`} className="w-[30px] shrink-0 flex justify-center">
        <svg width="12" height="12" viewBox="0 0 12 12" stroke="#808080" strokeWidth="2.5"><path d={node.toggle === 'plus' ? 'M0 6h12M6 0v12' : 'M0 6h12'} /></svg>
      </button>
    )}
    {node.active && <span className="w-[28px] mr-[7px] border-b-2 border-dashed border-[#cdcdcd]" />}
    {node.icon && <span className={node.active ? '' : 'ml-[5px]'}>{nodeIcons[node.icon]}</span>}
    <span className="ml-[6px]">{node.label}</span>
  </li>
);

const ProjectBrowser = () => (
  <section className="flex-1 min-h-0 flex flex-col bg-white overflow-hidden">
    <PaletteHeader title="Projektbrowser - Projekt1" />
    <label className="mt-[9px] ml-3 w-[460px] h-[33px] shrink-0 border-2 border-[#dedede] flex items-center pl-[9px]">
      <svg width="22" height="22" viewBox="0 0 22 22" fill="none" stroke="#777"><circle cx="9" cy="9" r="7" strokeWidth="2" /><path d="M14 14l6 6" strokeWidth="3" /></svg>
      <input placeholder="Suchen" className="ml-[9px] flex-1 outline-none text-[15px] placeholder:text-[#aaa]" />
    </label>
    <div className="mt-[10px] flex flex-1 min-h-0">
      <ul className="w-[459px] overflow-hidden text-[18px] leading-[24px]">
        {nodes.map((node) => <TreeRow key={node.label} node={node} />)}
      </ul>
      <div className="w-[23px] bg-[#e9e9e9] flex flex-col items-center">
        <span className="h-[22px] w-full border-b border-[#d0d0d0] flex items-center justify-center"><Chevron dir="up" /></span>
        <span className="mt-[54px] w-[11px] h-[137px] rounded-full bg-[#8f8f8f]" />
        <span className="mt-auto h-[22px] w-full border-t border-[#d0d0d0] flex items-center justify-center"><Chevron dir="down" /></span>
      </div>
    </div>
  </section>
);

/* ---------- Drawing view ---------- */

const contours = [
  '310,215 551,205 760,170 1000,174 1100,176 1424,220 1556,224',
  '310,279 464,304 805,391 935,406 1025,417 1118,427 1290,439 1530,429 1556,421',
  '310,396 435,489 615,580 770,657 1012,685 1312,662 1556,585',
  '310,532 390,634 578,777 618,808',
  '687,808 698,783 726,750 801,730 905,745 1043,777 1180,808',
  '764,808 772,795 826,777 905,790 999,808',
  '1460,808 1502,777 1556,738',
];

const boundaries = [
  '352,158 519,443 390,634',
  '519,443 849,268 1278,158',
  '849,268 1002,417 1209,617 1374,777 1407,808',
  '310,604 390,634 1145,777 1311,808',
  '1463,159 1556,251',
];

const markers = [[849, 268], [519, 443], [390, 635], [1429, 830]];

const polygon = (cx: number, cy: number) =>
  Array.from({ length: 14 }, (_, i) => {
    const a = ((i + 0.5) / 14) * Math.PI * 2 - Math.PI / 2;
    return `${cx + 30 * Math.cos(a)},${cy + 30 * Math.sin(a)}`;
  }).join(' ');

const Coordinates: React.FC<{ place: string; x: string; y: string }> = ({ place, x, y }) => (
  <div className={`absolute ${place} flex flex-col gap-[3px] whitespace-nowrap font-['Liberation_Sans',Arial,sans-serif] text-[39px] leading-[43px] text-[#dfaad2] [text-shadow:-1px_0_#25258f,1px_0_#c23a48]`}>
    <div>x =<br />{x}</div>
    <div>y =<br />{y}</div>
  </div>
);

const Elevation: React.FC<{ place: string; value: string }> = ({ place, value }) => (
  <div className={`absolute ${place} font-['Liberation_Sans',Arial,sans-serif] text-[53px] leading-[54px] text-[#b4dca6] [text-shadow:-1px_0_#1f3f7a,1px_0_#7a3a2a,0_1px_#7a9a70,0_-1px_#7a9a70]`}>
    {value}
  </div>
);

const NameDialog = () => (
  <div className="absolute left-[893px] top-[425px] w-[664px] h-[302px] border-4 border-[#e07f16] bg-linear-to-b from-white to-[#bdbdbd] pt-px px-[3px]">
    <div role="dialog" aria-labelledby="dialog-title" className="h-[281px] rounded-2xl border-2 border-[#b4b4b4] bg-[#efefef] overflow-hidden text-[#222] text-[23px] flex flex-col shadow-[0_4px_8px_rgba(0,0,0,0.35)]">
      <div className="h-[65px] bg-[#f9f0ec] flex items-center justify-between pl-[17px] pr-[19px] pb-1">
        <h2 id="dialog-title" className="text-[24px]">Name</h2>
        <button aria-label="Dialog schließen"><Cross size={23} color="#222" weight={1.2} /></button>
      </div>
      <div className="flex-1 flex items-center pl-[21px] pb-[16px]">
        <label htmlFor="mass-name" className="w-[109px]">Name:</label>
        <input id="mass-name" defaultValue="Bürogebäude V1" className="w-[390px] h-[49px] bg-white border border-[#ddd] border-b-4 border-b-[#1f6db0] pl-[9px] pb-1 outline-none" />
      </div>
      <div className="h-[82px] mx-[3px] border-t-2 border-[#a4a4a4] flex justify-end items-center gap-[17px] pr-[15px] pt-3 pb-[6px]">
        <button className="w-[191px] h-[48px] rounded-lg border-2 border-[#2273b5] bg-[#dfedf9]">OK</button>
        <button className="w-[191px] h-[48px] rounded-lg border-2 border-[#d0d0d0] bg-white">Abbrechen</button>
      </div>
    </div>
    <Pointer className="absolute left-[384px] top-[251px] w-[28px] h-[42px]" />
  </div>
);

const Drawing = () => (
  <div className="relative flex-1 overflow-hidden bg-white">
    <svg viewBox="309 158 1247 650" preserveAspectRatio="xMinYMin slice" className="absolute inset-0 w-full h-full" fill="none" strokeWidth="0.65">
      {contours.map((points) => <polyline key={points} points={points} stroke="#8c8c8c" />)}
      {boundaries.map((points) => <polyline key={points} points={points} stroke="#9ccb92" />)}
      <polygon points="840,327 553,478 471,601 1281,753" stroke="#a0c898" strokeDasharray="8 2 2 2" />
      {markers.map(([cx, cy]) => <polygon key={cx} points={polygon(cx, cy)} stroke="#d79ac9" />)}
      <path d="M514 332l6 3-6 3zM1285 332l-6 3 6 3z" fill="#aaa" />
      <path d="M525 330v10" stroke="#bbb" strokeWidth="2" strokeDasharray="3 1" />
    </svg>
    <Coordinates place="left-[637px] top-[30px]" x="21326.5316" y="193446.7801" />
    <Coordinates place="left-[163px] top-[276px]" x="21292.2654" y="193428.6087" />
    <Coordinates place="-left-[15px] top-[848px]" x="21278.8204" y="193408.4871" />
    <Elevation place="left-[1439px] top-[265px]" value="848" />
    <Elevation place="left-[736px] top-[544px]" value="849" />
    <NameDialog />
  </div>
);

const bulb = <path d="M19 11c3 0 5 2 5 5 0 2-2 3-2 5h-5c0-2-2-3-2-5 0-3 1-5 4-5zM17 22h5v2h-5z" fill="#5bbfcf" stroke="none" />;

const viewIcons: { label: string; icon: React.ReactNode }[] = [
  { label: 'Detaillierungsgrad', icon: <><path d="M2 4h20v16H2z" fill="#eee" strokeWidth="2.5" /><path d="M4 6h5v4H4zM15 6h5v4h-5zM9 10h6v4H9zM4 14h5v4H4zM15 14h5v4h-5z" fill="#777" stroke="none" /></> },
  { label: 'Visueller Stil', icon: <path d="M3 8h12v14H3zM3 8l6-5h12l-6 5M21 3v13l-6 6" fill="#f6f6f6" /> },
  { label: 'Sonnenbahn', icon: <><circle cx="10" cy="10" r="5" fill="#f0a11a" stroke="none" /><path d="M10 1v3M10 16v3M1 10h3M3 3l3 3M17 3l-3 3M3 17l3-3" stroke="#f0a11a" strokeWidth="2" />{bulb}</> },
  { label: 'Schatten', icon: <><circle cx="10" cy="9" r="7" fill="#e4e4e4" /><path d="M2 20h12" stroke="#aaa" strokeWidth="3" />{bulb}</> },
  { label: 'Ansicht zuschneiden', icon: <><path d="M6 22V8h18" strokeWidth="3" /><path d="M0 17h5M16 1v5M8 17h4M16 10v3" stroke="#2d86d0" strokeWidth="2" /><path d="M14 14l8 8M22 14l-8 8" stroke="#dc3b45" strokeWidth="3" /></> },
  { label: 'Zuschneidebereich', icon: <><path d="M6 22V8h18" strokeWidth="3" /><path d="M0 17h5M16 1v5M8 17h4" stroke="#2d86d0" strokeWidth="2" />{bulb}</> },
  { label: 'Temporär ausblenden', icon: <><circle cx="7" cy="15" r="4" /><circle cx="17" cy="15" r="4" /><path d="M11 15h2M4 12c0-4 1-6 4-6M20 12c0-4-1-6-4-6" /></> },
  { label: 'Verdeckte Elemente', icon: <><path d="M12 2c4 0 6 2 6 6 0 3-3 4-3 8H9c0-4-3-5-3-8 0-4 2-6 6-6z" fill="#5bbfcf" stroke="none" /><path d="M9 18h6v4H9z" fill="#777" stroke="none" /></> },
  { label: 'Temporäre Ansichtseigenschaften', icon: <><path d="M10 16H2V2h15v7M5 6h8M5 10h5" /><path d="M9 10h12v12H9z" strokeDasharray="4 3" /></> },
  { label: 'Analytisches Modell', icon: <><path d="M2 22V6l5-4h15v14M2 8h14M8 3v18M14 3v10" strokeWidth="2" /><path d="M6 13v9M11 13v9M3 16h11" stroke="#dc3b45" />{bulb}</> },
  { label: 'Abhängigkeiten anzeigen', icon: <><path d="M3 2v20M21 2v9M3 5h18M6 17h8" strokeDasharray="5 1" />{bulb}</> },
];

const View = () => (
  <section className="flex-1 min-w-0 flex flex-col">
    <div className="h-[27px] shrink-0 flex items-stretch bg-[#cbcbcb] text-[14px] text-[#444]">
      <button className="w-[165px] bg-white flex items-center pl-[6px] pr-[6px] text-[15px] font-bold">
        <PlanIcon className="w-[22px] h-[22px]" />
        <span className="ml-[8px] mr-auto">EG FBOK</span>
        <Cross size={13} />
      </button>
      <button className="flex items-center gap-2 pl-[6px]">
        <svg width="22" height="22" viewBox="0 0 24 24" fill="#d8d8d8" stroke="#888" strokeWidth="1.5"><path d="M2 12L12 2l10 10M5 10v12h14V10" /><path d="M10 22v-8h4v8" fill="#efe3b0" /></svg>
        {'{3D}'}
      </button>
      <button aria-label="Ansichten auflisten" className="ml-auto mr-[4px] flex flex-col items-center justify-center gap-[3px]">
        <span className="w-[11px] h-[2px] bg-[#777]" />
        <Caret className="text-[#777]" />
      </button>
    </div>
    <div className="flex-1 min-h-0 flex">
      <Drawing />
      <div className="w-5 bg-[#e9e9e9] flex flex-col items-center">
        <span className="h-[22px] w-full border-b border-[#d0d0d0] flex items-center justify-center"><Chevron dir="up" /></span>
        <span className="flex-1 flex items-center"><span className="w-[11px] h-[22px] rounded-full bg-[#8f8f8f]" /></span>
        <span className="h-[22px] w-full border-t border-[#d0d0d0] flex items-center justify-center"><Chevron dir="down" /></span>
      </div>
    </div>
    <div className="h-[23px] shrink-0 flex items-center bg-[#f4f4f4]">
      <button className="ml-[33px] w-[70px] text-left text-[14px] text-[#444]">1 : 100</button>
      <div className="w-[370px] flex justify-between">
        {viewIcons.map((item) => (
          <button key={item.label} aria-label={item.label} className="w-[33px] flex justify-center">
            <svg width="22" height="22" viewBox="0 0 24 24" fill="none" stroke="#666" strokeWidth="1.5">{item.icon}</svg>
          </button>
        ))}
      </div>
      <div className="flex-1 h-full bg-[#e9e9e9] flex items-center">
        <span className="w-[20px] h-full border-r border-[#d0d0d0] flex items-center justify-center"><Chevron dir="left" /></span>
        <span className="flex-1 flex justify-center"><span className="w-[22px] h-[11px] rounded-full bg-[#8f8f8f]" /></span>
        <span className="w-[20px] h-full border-l border-[#d0d0d0] flex items-center justify-center"><Chevron dir="right" /></span>
      </div>
      <div className="w-5 flex justify-center">
        <svg width="12" height="12" viewBox="0 0 12 12" fill="#aaa"><path d="M8 1h3v3H8zM8 7h3v3H8zM2 7h3v3H2z" /></svg>
      </div>
    </div>
  </section>
);

/* ---------- Status bar ---------- */

const arrow = <path d="M11 9v13l3-3 3 5 2-1-3-5h4z" fill="#fff" stroke="#333" strokeWidth="1.3" />;
const redCross = <path d="M15 1l8 8M23 1l-8 8" stroke="#dc3b45" strokeWidth="3" />;

const selectIcons: { label: string; icon: React.ReactNode }[] = [
  { label: 'Verknüpfungen auswählen', icon: <><path d="M9 3H5C0 3 0 9 5 9h4M13 3h5c5 0 5 6 0 6M7 6h9" stroke="#e8824a" strokeWidth="2" />{arrow}</> },
  { label: 'Unterlagen auswählen', icon: <><path d="M1 9l9-6v6zM1 15h9v-5zM14 4l-4 4" fill="#3f93d6" stroke="#3f93d6" />{redCross}{arrow}</> },
  { label: 'Fixierte Elemente auswählen', icon: <><path d="M4 2h12M6 2v8L2 14h10M14 2v6M7 14v7" />{arrow}</> },
  { label: 'Elemente nach Fläche auswählen', icon: <><path d="M1 5l5-3h8v17H6l-5 3z" fill="#5fabe4" stroke="#2d86d0" />{redCross}{arrow}</> },
  { label: 'Elemente bei Auswahl ziehen', icon: <><path d="M8 1v18M1 9h15M5 4l3-3 3 3M3 6L0 9l3 3" stroke="#333" strokeWidth="2" />{arrow}</> },
  { label: 'Hintergrundprozesse', icon: <circle cx="12" cy="12" r="9" stroke="#c2c2c2" strokeWidth="3.5" strokeDasharray="3 4" /> },
];

const StatusBar = () => (
  <footer className="h-[34px] shrink-0 flex items-center bg-[#f4f4f4] border-t-2 border-white text-[15px] text-[#444] whitespace-nowrap">
    <div className="w-[1095px] pl-px">Zur Auswahl klicken, TABULATOR für andere Auswahl, STRG zum Hinzufügen, UMSCHALT zum Aufheben der Auswahl.</div>
    <button aria-label="Zusammenarbeit" className="w-[283px]">
      <svg width="22" height="22" viewBox="0 0 24 24"><path d="M2 6l6-3 3 4v10l-4 2-5-4z" fill="#3c8ed0" /><path d="M10 3l5-2 5 4v6l-6 2z" fill="#e58a3c" /><path d="M9 9l6 2v12l-6-4z" fill="#48a868" /><path d="M15 12l6-3v8l-6 5z" fill="#57b6d8" /><path d="M9 9l6 2v12M15 12l6-3" fill="none" stroke="#fff" /></svg>
    </button>
    <Chevron dir="down" />
    <svg width="20" height="22" viewBox="0 0 24 24" className="ml-[14px]" fill="none" stroke="#aaa" strokeWidth="2"><path d="M13 2h9l-4 6zM1 21h15l-3-9H4zM5 12l3-6 4 2" /></svg>
    <span className="w-[47px] text-[#aaa]">:0</span>
    <button aria-label="Entwurfsoptionen" className="w-[34px]">
      <svg width="22" height="22" viewBox="0 0 24 24" fill="none" stroke="#555" strokeWidth="2"><rect x="2" y="2" width="20" height="20" /><path d="M2 4h20" strokeWidth="4" /><path d="M5 11h2M5 15h2M5 19h2M9 11h10M9 15h10M9 19h10" /></svg>
    </button>
    <button aria-label="Zu Option hinzufügen" className="w-[34px]">
      <svg width="22" height="22" viewBox="0 0 24 24" fill="none" stroke="#aaa" strokeWidth="2"><path d="M5 12V2h17v14H12" /><path d="M5 3h17" strokeWidth="4" /><path d="M9 8h9M9 12h9M1 19h9M8 15l5 4-5 4" /></svg>
    </button>
    <select aria-label="Aktive Entwurfsoption" className="appearance-none w-[246px] pt-1 outline-none whitespace-pre">
      <option>V1- Ohne Terrasse &nbsp;&lt;primär&gt;</option>
    </select>
    <Chevron dir="down" />
    <label className="ml-[13px] flex items-center">
      <span className="relative w-4 h-4">
        <input type="checkbox" defaultChecked className="block appearance-none w-4 h-4 rounded-sm bg-[#666]" />
        <svg width="16" height="16" viewBox="0 0 16 16" className="absolute inset-0 pointer-events-none" fill="none" stroke="#fff" strokeWidth="2"><path d="M3 8l4 4 6-8" /></svg>
      </span>
      <span className="ml-[2px]">Nur aktive</span>
    </label>
    <div className="ml-auto flex items-center pr-[90px]">
      {selectIcons.map((item) => (
        <button key={item.label} aria-label={item.label} className="w-[34px] flex justify-center">
          <svg width="22" height="22" viewBox="0 0 24 24" fill="none" stroke="#666" strokeWidth="1.5">{item.icon}</svg>
        </button>
      ))}
      <button className="ml-[5px] flex items-center">
        <svg width="22" height="22" viewBox="0 0 24 24" fill="#ccc" stroke="#555" strokeWidth="1.8"><path d="M1 2h22l-8 9v11l-6-3v-8z" /></svg>
        :0
      </button>
    </div>
  </footer>
);

/* Highlights drawn over the ribbon */
const Callouts = () => (
  <div className="absolute left-0 top-0 pointer-events-none">
    <div className="absolute left-[370px] top-[58px] w-[110px] h-[107px] border-4 border-[#e07f16]" />
    <div className="absolute left-[926px] top-[32px] w-[227px] h-[38px] border-4 border-[#e07f16]" />
    <svg width="450" height="80" viewBox="480 42 450 80" className="absolute left-[480px] top-[42px]">
      <path d="M928 48L504 108" stroke="#15658c" strokeWidth="5" />
      <path d="M480 112l26-15 4 21z" fill="#15658c" />
    </svg>
    <Pointer className="absolute left-[457px] top-[147px] w-[18px] h-[27px]" />
  </div>
);

const App: React.FC = () => (
  <div className="relative h-screen flex flex-col overflow-hidden bg-[#f4f4f4] font-['Open_Sans','Noto_Sans',sans-serif]">
    <TitleBar />
    <RibbonTabs />
    <Ribbon />
    <div className="h-[35px] shrink-0 border-b-2 border-[#c0c0c0]" />
    <main className="flex-1 min-h-0 flex">
      <aside className="w-[488px] shrink-0 flex flex-col border-r-[3px] border-[#c0c0c0] bg-[#f4f4f4]">
        <Properties />
        <ProjectBrowser />
      </aside>
      <View />
    </main>
    <StatusBar />
    <Callouts />
  </div>
);

export default App;
